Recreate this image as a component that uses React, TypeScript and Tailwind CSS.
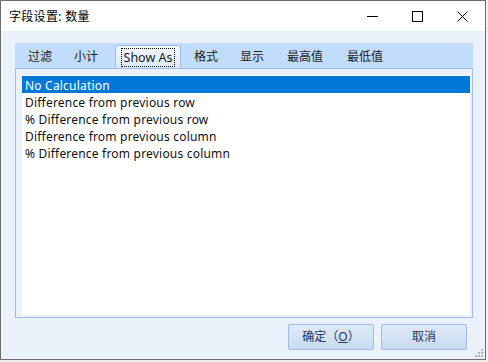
const tabs = [
  { label: '过滤', cls: 'ml-[2px] w-[46px]' },
  { label: '小计', cls: 'w-[46px]' },
  { label: 'Show As', cls: 'ml-[6px] w-[66px]', active: true },
  { label: '格式', cls: 'ml-[2px] w-[46px]' },
  { label: '显示', cls: 'w-[46px]' },
  { label: '最高值', cls: 'w-[60px]' },
  { label: '最低值', cls: 'w-[60px]' },
]

const rows = [
  'No Calculation',
  'Difference from previous row',
  '% Difference from previous row',
  'Difference from previous column',
  '% Difference from previous column',
]

const font = "font-['Noto_Sans','Noto_Sans_CJK_SC',sans-serif]"

const App = () => {
  return (
    <div className={`h-[362px] w-[488px] overflow-hidden bg-[#f0f0f0] ${font} text-[12px]`}>
      <div className="flex h-[360px] w-[486px] flex-col border border-[#6e6e6e]">
        {/* title bar */}
        <div className="flex h-[30px] items-center bg-white">
          <span className="pl-[8px] pt-[1px] text-[12px] tracking-[0.3px] text-black">字段设置: 数量</span>
          <div className="grow" />
          <div className="flex h-full items-center">
            <div className="flex h-full w-[45px] items-center justify-center">
              <svg width="11" height="11" viewBox="0 0 11 11">
                <line x1="0" y1="5.5" x2="11" y2="5.5" stroke="#000" strokeWidth="1" />
              </svg>
            </div>
            <div className="flex h-full w-[45px] items-center justify-center">
              <svg width="11" height="11" viewBox="0 0 11 11">
                <rect x="0.5" y="0.5" width="10" height="10" fill="none" stroke="#000" strokeWidth="1" />
              </svg>
            </div>
            <div className="flex h-full w-[45px] items-center justify-center">
              <svg width="11" height="11" viewBox="0 0 11 11">
                <path d="M0.5 0.5 L10.5 10.5 M10.5 0.5 L0.5 10.5" stroke="#000" strokeWidth="1" />
              </svg>
            </div>
          </div>
        </div>

        {/* body */}
        <div className="relative flex grow flex-col bg-[#eaf1fb] pl-[14px] pr-[11px] pt-[12px]">
          <div className="flex h-[25px] w-[458px] items-end bg-[#c2dcfc]">
            {tabs.map((t) =>
              t.active ? (
                <div
                  key={t.label}
                  className={`${t.cls} flex h-[23px] items-center justify-center rounded-t-[3px] border border-b-0 border-[#9dbce8] bg-linear-to-b from-[#f3f7fd] to-[#dce8f7]`}>
                  <span className="border border-dotted border-black px-[2px] text-[12.5px] leading-[17px] text-[#1b1b1b]">
                    {t.label}
                  </span>
                </div>
              ) : (
                <div
                  key={t.label}
                  className={`${t.cls} flex h-[23px] items-center justify-center text-[#1b1b1b]`}>
                  {t.label}
                </div>
              ),
            )}
          </div>

          <div className="h-[250px] w-[458px] border border-[#9dbce8] bg-[#eaf1fb] pb-[2px] pl-[6px] pr-[2px] pt-[6px]">
            <div className="h-full w-full bg-white pt-[1px] tracking-[0.2px]">
              {rows.map((r, i) => (
                <div
                  key={r}
                  className={`flex h-[17px] items-center pl-[3px] pt-[2px] ${i === 0 ? 'bg-[#0078d7] text-white' : 'text-[#111]'}`}>
                  {r}
                </div>
              ))}
            </div>
          </div>

          <div className="mt-[6px] flex justify-end gap-[7px] pr-[7px]">
            <button className="flex h-[26px] w-[86px] items-center justify-center rounded-[2px] border border-[#9ebde6] bg-linear-to-b from-[#dfe9f7] to-[#c9daf1] text-[#1e395b]">
              确定（<span className="underline">O</span>）
            </button>
            <button className="flex h-[26px] w-[86px] items-center justify-center rounded-[2px] border border-[#9ebde6] bg-linear-to-b from-[#dfe9f7] to-[#c9daf1] text-[#1e395b]">
              取消
            </button>
          </div>

          <svg
            className="absolute bottom-[2px] right-[2px]"
            width="8"
            height="8"
            viewBox="0 0 8 8">
            <rect x="6" y="0" width="2" height="2" fill="#b4b4b4" />
            <rect x="3" y="3" width="2" height="2" fill="#b4b4b4" />
            <rect x="6" y="3" width="2" height="2" fill="#b4b4b4" />
            <rect x="0" y="6" width="2" height="2" fill="#b4b4b4" />
            <rect x="3" y="6" width="2" height="2" fill="#b4b4b4" />
            <rect x="6" y="6" width="2" height="2" fill="#b4b4b4" />
          </svg>
        </div>
      </div>
    </div>
  )
}

export default App
